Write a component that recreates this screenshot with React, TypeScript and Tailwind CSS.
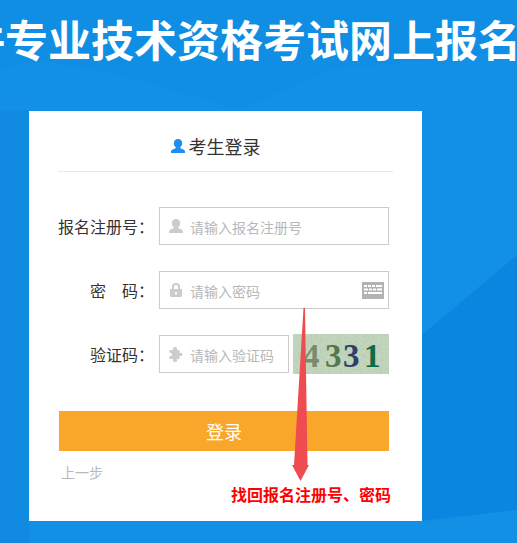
import type { ReactNode } from "react";

const FONT = { fontFamily: '"Noto Sans CJK SC", "Noto Sans", sans-serif' };

function UserIcon({ className }: { className: string }) {
  return (
    <svg viewBox="0 0 16 16" className={className} fill="currentColor" aria-hidden>
      <path d="M8 0C11 0 12.800 2 12.800 4.800 12.800 6.800 11.800 8.500 10.600 9.400V10.300C11 10.900 12.300 11.300 13.500 11.800 14.800 12.300 15.600 12.900 16 13.800V16H0V13.800C0.400 12.900 1.200 12.300 2.500 11.800 3.700 11.300 5 10.900 5.400 10.300V9.400C4.200 8.500 3.200 6.800 3.200 4.800 3.200 2 5 0 8 0z" />
    </svg>
  );
}

function LockIcon() {
  return (
    <svg viewBox="0 0 12 14" className="h-[14px] w-3 text-[#cccccc]" fill="currentColor" aria-hidden>
      <path d="M6 0a4 4 0 0 1 4 4v2h1a1 1 0 0 1 1 1v6a1 1 0 0 1-1 1H1a1 1 0 0 1-1-1V7a1 1 0 0 1 1-1h1V4a4 4 0 0 1 4-4zm0 2a2 2 0 0 0-2 2v2h4V4a2 2 0 0 0-2-2zM5 9v2.500h2V9z" fillRule="evenodd" />
    </svg>
  );
}

function PuzzleIcon() {
  return (
    <svg viewBox="0 0 16 16" className="h-4 w-4 text-[#cccccc]" fill="currentColor" aria-hidden>
      <path d="M1.500 4h3.200c0.500 0 0.600-0.400 0.300-0.900C4.600 2.500 5.200 1 7 1s2.400 1.500 2 2.100c-0.300 0.500-0.200 0.900 0.300 0.900h2.200v2.600c0 0.500 0.400 0.600 0.900 0.300 0.600-0.400 2.100 0.200 2.100 1.600s-1.500 2-2.100 1.600c-0.500-0.300-0.900-0.200-0.900 0.300V13H9.300c-0.500 0-0.600 0.400-0.300 0.900C9.400 14.500 8.800 16 7 16s-2.400-1.500-2-2.100c0.300-0.500 0.200-0.900-0.300-0.900H1.500v-2.700c0-0.500 0.400-0.600 0.900-0.300 0.600 0.400 1.600-0.200 1.600-1.500S3 6.400 2.400 6.800c-0.500 0.300-0.900 0.200-0.900-0.300z" />
    </svg>
  );
}

function KeyboardIcon() {
  return (
    <svg viewBox="0 0 22 17" className="h-[17px] w-[22px]" aria-hidden>
      <rect width="22" height="17" fill="#b3b3b3" />
      <g fill="#ffffff">
        <rect x="2" y="3" width="3" height="2" />
        <rect x="6" y="3" width="3" height="2" />
        <rect x="10" y="3" width="3" height="2" />
        <rect x="14" y="3" width="6" height="2" />
        <rect x="2" y="6.500" width="4" height="2" />
        <rect x="7" y="6.500" width="3" height="2" />
        <rect x="11" y="6.500" width="3" height="2" />
        <rect x="15" y="6.500" width="5" height="2" />
        <rect x="2" y="10" width="3" height="2" />
        <rect x="6" y="10" width="14" height="2" />
      </g>
    </svg>
  );
}

function Captcha() {
  return (
    <div className="ml-1 h-10 w-24 shrink-0 bg-[#b5cdb0]">
      <svg viewBox="0 0 96 40" className="h-full w-full" aria-hidden>
        <filter id="captcha-noise" x="0" y="0" width="100%" height="100%">
          <feTurbulence type="fractalNoise" baseFrequency="0.4" numOctaves="2" seed="4" />
          <feColorMatrix values="0 0 0 0 0.48  0 0 0 0 0.62  0 0 0 0 0.46  6 0 0 0 -2.7" />
        </filter>
        <rect width="96" height="40" fill="#c3d6bd" />
        <rect width="96" height="40" filter="url(#captcha-noise)" opacity="0.75" />
        <g style={{ fontFamily: '"Liberation Serif", serif' }} fontSize="33" fontWeight="bold">
          <text x="10" y="33" fill="#7c8a6c">4</text>
          <text x="32" y="33" fill="#55774d">3</text>
          <text x="50" y="33" fill="#2f3f6a">3</text>
          <text x="71" y="33" fill="#0f6b45">1</text>
        </g>
      </svg>
    </div>
  );
}

function Field({ label, children }: { label: ReactNode; children: ReactNode }) {
  return (
    <div className="flex h-[38px] items-center">
      <div className="w-[101px] shrink-0 pr-[5px] text-right text-base whitespace-pre text-[#333333]">{label}</div>
      {children}
    </div>
  );
}

function InputBox({ icon, text, wide, right }: { icon: ReactNode; text: string; wide?: boolean; right?: ReactNode }) {
  return (
    <div className={`flex h-[38px] shrink-0 items-center border border-[#cccccc] ${wide ? "w-[230px]" : "w-[130px]"}`}>
      <span className="flex w-[30px] shrink-0 justify-center pl-[2px]">{icon}</span>
      <span className="flex-1 pt-[2px] text-sm text-[#b8b8b8]">{text}</span>
      {right && <span className="mr-1 flex">{right}</span>}
    </div>
  );
}

export default function App() {
  return (
    <div className="relative h-[543px] w-[517px] overflow-hidden bg-[#1290e5]" style={FONT}>
      {/* faint facets in the page background */}
      <svg viewBox="0 0 517 543" className="absolute inset-0 h-full w-full" aria-hidden>
        <polygon points="0,0 517,0 517,50 330,70 240,110 120,75 40,60 0,70" fill="#108ee4" />
        <polygon points="422,335 517,255 517,510 422,521" fill="#0a86e1" />
        <polygon points="0,110 29,110 29,543 0,543" fill="#118be2" />
      </svg>

      <div className="relative flex h-[111px] flex-col overflow-hidden">
        <h1 className="mt-[10px] ml-[-38px] w-max text-[43px] leading-[56px] font-bold whitespace-nowrap text-white">
          件专业技术资格考试网上报名系统
        </h1>
      </div>

      <div className="relative ml-[29px] h-[410px] w-[393px] bg-white px-[29px]">
        <div className="flex h-[61px] items-center justify-center border-b border-[#e8e8e8] pt-[9px] pr-[20px]">
          <UserIcon className="mr-1 h-[14px] w-[14px] text-[#1e8fee]" />
          <span className="text-lg text-[#333333]">考生登录</span>
        </div>

        <div className="mt-[35px] flex flex-col gap-[26px]">
          <Field label="报名注册号：">
            <InputBox wide icon={<UserIcon className="h-[14px] w-[14px] text-[#cccccc]" />} text="请输入报名注册号" />
          </Field>
          <Field label={"密\u3000码："}>
            <InputBox wide icon={<LockIcon />} text="请输入密码" right={<KeyboardIcon />} />
          </Field>
          <Field label="验证码：">
            <InputBox icon={<PuzzleIcon />} text="请输入验证码" />
            <Captcha />
          </Field>
        </div>

        <button
          type="button"
          className="mt-[38px] ml-px block h-10 w-[330px] bg-[#f9a72b] text-lg text-white"
        >
          登录
        </button>

        <div className="mt-[11px] ml-[3px] text-sm leading-5 text-[#b9b9b9]">上一步</div>
        <div className="mt-[2px] mr-[2px] text-right text-base leading-5 font-bold text-[#ff0000]">
          找回报名注册号、密码
        </div>
      </div>

      {/* red arrow drawn over the form */}
      <svg viewBox="0 0 517 543" className="absolute inset-0 h-full w-full" aria-hidden>
        <polygon points="303.500,308 305,308 307.500,465 309,465 300.500,481 292,465 294,465" fill="#ee4c50" />
      </svg>
    </div>
  );
}
